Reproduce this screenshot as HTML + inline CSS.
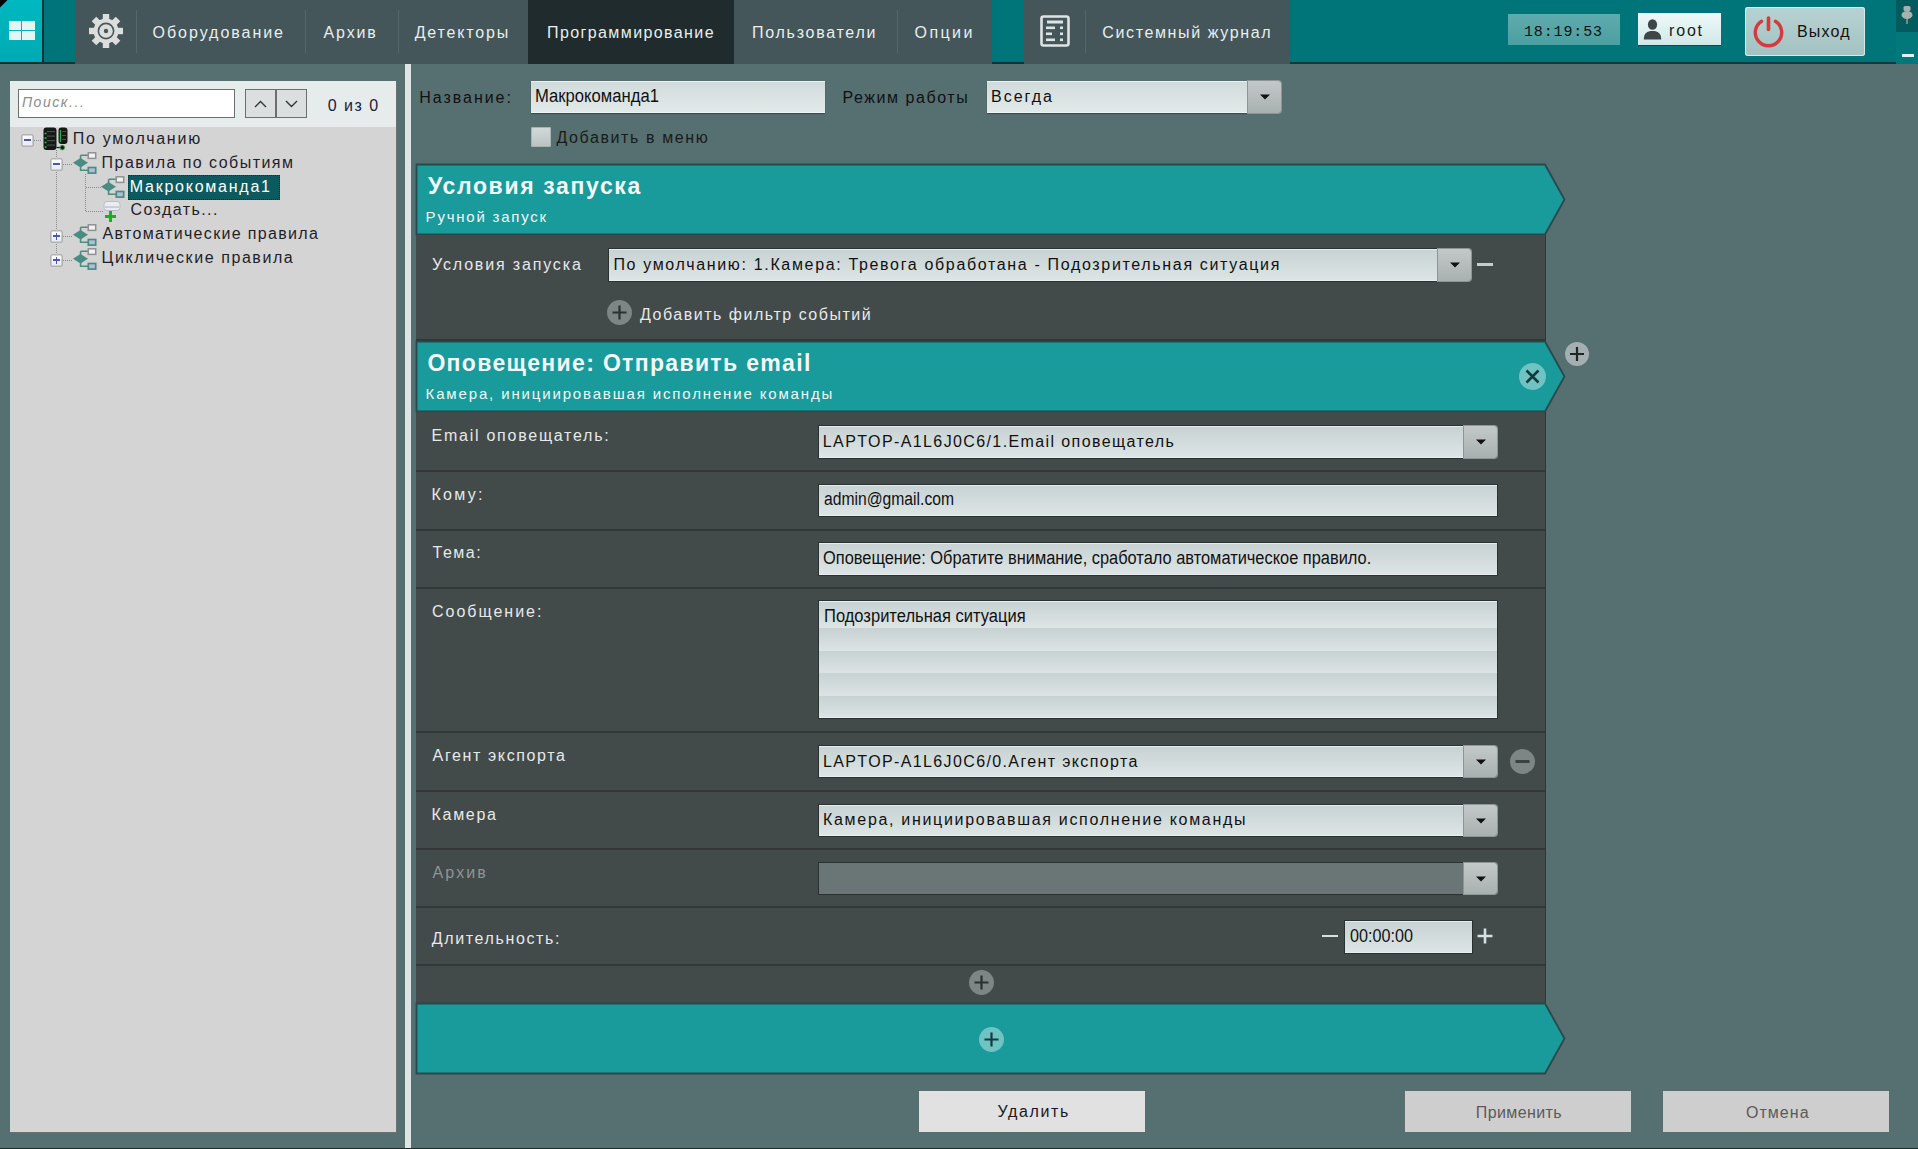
<!DOCTYPE html>
<html><head><meta charset="utf-8"><style>
html,body{margin:0;padding:0}
body{width:1918px;height:1149px;overflow:hidden;position:relative;background:#566f71;font-family:'Liberation Sans',sans-serif}
body>div,body>svg{position:absolute}
</style></head><body>
<div style="left:0px;top:0px;width:1896px;height:64px;background:#44565a"></div>
<div style="left:0px;top:0px;width:42px;height:63px;background:linear-gradient(#00b8c0,#00aab2)"></div>
<svg style="left:0;top:0" width="8" height="8"><polygon points="0,0 7.5,0 0,7.5" fill="#040404"/></svg>
<div style="left:42px;top:0px;width:2px;height:64px;background:#0b3436"></div>
<div style="left:44px;top:0px;width:31px;height:63px;background:#007579"></div>
<div style="left:0px;top:62px;width:75px;height:2px;background:#0b3436"></div>
<div style="left:9px;top:21px;width:12px;height:9px;background:#e2f6f6"></div>
<div style="left:22px;top:21px;width:13px;height:9px;background:#e2f6f6"></div>
<div style="left:9px;top:31px;width:12px;height:9px;background:#e2f6f6"></div>
<div style="left:22px;top:31px;width:13px;height:9px;background:#e2f6f6"></div>
<svg style="left:86px;top:11px" width="40" height="40" viewBox="-20 -20 40 40">
<g fill="#dcdede"><circle r="12.5"/><rect x="-3.2" y="-17" width="6.4" height="8" transform="rotate(0)"/><rect x="-3.2" y="-17" width="6.4" height="8" transform="rotate(45)"/><rect x="-3.2" y="-17" width="6.4" height="8" transform="rotate(90)"/><rect x="-3.2" y="-17" width="6.4" height="8" transform="rotate(135)"/><rect x="-3.2" y="-17" width="6.4" height="8" transform="rotate(180)"/><rect x="-3.2" y="-17" width="6.4" height="8" transform="rotate(225)"/><rect x="-3.2" y="-17" width="6.4" height="8" transform="rotate(270)"/><rect x="-3.2" y="-17" width="6.4" height="8" transform="rotate(315)"/></g>
<circle r="7.6" fill="none" stroke="#4a5759" stroke-width="1.6"/><circle r="2.2" fill="#4a5759"/></svg>
<div style="left:136px;top:10px;width:1px;height:43px;background:#56676a"></div>
<div style="left:305px;top:10px;width:1px;height:43px;background:#56676a"></div>
<div style="left:398px;top:10px;width:1px;height:43px;background:#56676a"></div>
<div style="left:897px;top:10px;width:1px;height:43px;background:#56676a"></div>
<div style="left:1085px;top:10px;width:1px;height:43px;background:#56676a"></div>
<div style="left:528px;top:0px;width:206px;height:64px;background:#1f2b2c"></div>
<div style="left:992px;top:0px;width:32px;height:64px;background:#007579"></div>
<div style="left:992px;top:62px;width:32px;height:2px;background:#0e3536"></div>
<div style="left:1290px;top:0px;width:606px;height:64px;background:#007579"></div>
<div style="left:1290px;top:62px;width:606px;height:2px;background:#0e3a3c"></div>
<svg style="left:1040px;top:15px" width="32" height="33" viewBox="0 0 32 33">
<rect x="1.5" y="1.5" width="27" height="29" rx="2" fill="none" stroke="#dfe3e3" stroke-width="2.6"/>
<g fill="#dfe3e3"><rect x="7" y="5.5" width="16" height="3"/><rect x="6" y="11.5" width="9" height="2.6"/><rect x="20" y="11.5" width="3" height="2.6"/>
<rect x="6" y="17.5" width="6" height="2.6"/><rect x="20" y="17.5" width="3" height="2.6"/><rect x="6" y="23.5" width="9" height="2.6"/><rect x="20" y="23.5" width="3" height="2.6"/></g></svg>
<div style="left:1508px;top:14px;width:112px;height:31px;background:linear-gradient(#5eabad,#4d9fa1)"></div>
<div style="left:1638px;top:13px;width:83px;height:32px;background:linear-gradient(#eef8f8,#d2e8e8);box-shadow:0 1px 0 #0a4a4c"></div>
<svg style="left:1643px;top:19px" width="19" height="21" viewBox="0 0 19 21"><g fill="#3e4546"><ellipse cx="9.5" cy="5.5" rx="4.6" ry="5.3"/><path d="M0.8 20.5 C0.8 14.2 4 12 9.5 12 C15 12 18.2 14.2 18.2 20.5 Z"/></g></svg>
<div style="left:1745px;top:7px;width:120px;height:49px;background:linear-gradient(#b7d2d2,#a4c2c2);border-radius:3px;box-shadow:inset 0 0 0 1px #d6eaea"></div>
<svg style="left:1752px;top:15px" width="33" height="33" viewBox="0 0 33 33"><path d="M9.6 6.3 A13.2 13.2 0 1 0 23.4 6.3" fill="none" stroke="#d33b3d" stroke-width="3.4" stroke-linecap="round"/><line x1="16.5" y1="3" x2="16.5" y2="14.5" stroke="#d33b3d" stroke-width="3.6" stroke-linecap="round"/></svg>
<div style="left:1896px;top:0px;width:22px;height:32px;background:#035b5e"></div>
<div style="left:1896px;top:32px;width:22px;height:32px;background:#03787b"></div>
<svg style="left:1899px;top:5px" width="16" height="22" viewBox="0 0 16 22"><g fill="#a7b2ae"><rect x="4.5" y="1" width="7" height="5" rx="1.5"/><ellipse cx="8" cy="10" rx="5.5" ry="4"/><rect x="7.4" y="13" width="1.2" height="6"/></g></svg>
<div style="left:1902px;top:54px;width:12px;height:3px;background:#e3f0f0"></div>
<div style="left:10px;top:81px;width:386px;height:1051px;background:#d4d4d4;box-shadow:1px 1px 0 #6b6f6f"></div>
<div style="left:10px;top:81px;width:386px;height:46px;background:#e6ebeb"></div>
<div style="left:18px;top:89px;width:217px;height:29px;background:#fff;box-shadow:inset 0 0 0 1px #6e6e6e"></div>
<div style="left:245px;top:89px;width:31px;height:29px;background:#dcdfe0;box-shadow:inset 0 0 0 1px #6e6e6e"></div>
<div style="left:276px;top:89px;width:31px;height:29px;background:#dcdfe0;box-shadow:inset 0 0 0 1px #6e6e6e"></div>
<svg style="left:245px;top:89px" width="62" height="29" viewBox="0 0 62 29"><path d="M10 18 L15.5 12.5 L21 18" fill="none" stroke="#333" stroke-width="1.4"/><path d="M41 12 L46.5 17.5 L52 12" fill="none" stroke="#333" stroke-width="1.4"/></svg>
<div style="left:56px;top:150px;width:1px;height:110px;background:repeating-linear-gradient(#8a8a8a 0 1px,transparent 1px 2px)"></div>
<div style="left:34px;top:140px;width:8px;height:1px;background:repeating-linear-gradient(90deg,#8a8a8a 0 1px,transparent 1px 2px)"></div>
<div style="left:63px;top:164px;width:10px;height:1px;background:repeating-linear-gradient(90deg,#8a8a8a 0 1px,transparent 1px 2px)"></div>
<div style="left:63px;top:236px;width:10px;height:1px;background:repeating-linear-gradient(90deg,#8a8a8a 0 1px,transparent 1px 2px)"></div>
<div style="left:63px;top:260px;width:10px;height:1px;background:repeating-linear-gradient(90deg,#8a8a8a 0 1px,transparent 1px 2px)"></div>
<div style="left:85px;top:174px;width:1px;height:38px;background:repeating-linear-gradient(#8a8a8a 0 1px,transparent 1px 2px)"></div>
<div style="left:86px;top:187px;width:15px;height:1px;background:repeating-linear-gradient(90deg,#8a8a8a 0 1px,transparent 1px 2px)"></div>
<div style="left:86px;top:211px;width:18px;height:1px;background:repeating-linear-gradient(90deg,#8a8a8a 0 1px,transparent 1px 2px)"></div>
<div style="left:21px;top:133.5px;width:13px;height:13.0px;background:linear-gradient(#fff,#e6e8ee);border-radius:2px;box-shadow:inset 0 0 0 1.6px #b0b2b4"></div>
<div style="left:24px;top:139.3px;width:7px;height:1.3999999999999773px;background:#4a5aa8"></div>
<div style="left:50px;top:157.5px;width:13px;height:13.0px;background:linear-gradient(#fff,#e6e8ee);border-radius:2px;box-shadow:inset 0 0 0 1.6px #b0b2b4"></div>
<div style="left:53px;top:163.3px;width:7px;height:1.3999999999999773px;background:#4a5aa8"></div>
<div style="left:50px;top:229.5px;width:13px;height:13.0px;background:linear-gradient(#fff,#e6e8ee);border-radius:2px;box-shadow:inset 0 0 0 1.6px #b0b2b4"></div>
<div style="left:53px;top:235.3px;width:7px;height:1.3999999999999773px;background:#4a5aa8"></div>
<div style="left:55.8px;top:232.5px;width:1.4000000000000057px;height:7.0px;background:#4a5aa8"></div>
<div style="left:50px;top:253.5px;width:13px;height:13.0px;background:linear-gradient(#fff,#e6e8ee);border-radius:2px;box-shadow:inset 0 0 0 1.6px #b0b2b4"></div>
<div style="left:53px;top:259.3px;width:7px;height:1.3999999999999773px;background:#4a5aa8"></div>
<div style="left:55.8px;top:256.5px;width:1.4000000000000057px;height:7.0px;background:#4a5aa8"></div>
<svg style="left:43px;top:127px" width="26" height="24" viewBox="0 0 26 24">
<rect x="0.5" y="0.5" width="13" height="22.5" rx="3" fill="#151815"/><rect x="15.5" y="0.5" width="9" height="16.5" rx="3" fill="#151815"/>
<g fill="#4a4d4a"><rect x="4" y="4" width="8" height="1.2"/><rect x="4" y="8.5" width="8" height="1.2"/><rect x="4" y="13" width="8" height="1.2"/><rect x="4" y="17.5" width="8" height="1.2"/>
<rect x="19" y="4" width="4" height="1"/><rect x="19" y="8" width="4" height="1"/><rect x="19" y="12" width="4" height="1"/></g>
<g fill="#2fae4a"><circle cx="2.6" cy="6.5" r="1.1"/><circle cx="2.6" cy="11" r="1.1"/><circle cx="2.6" cy="15.5" r="1.1"/><circle cx="2.6" cy="20" r="1.1"/><rect x="16.8" y="3" width="1.3" height="12"/></g>
<path d="M13.5 20.5 H17" stroke="#151815" stroke-width="1.2"/><circle cx="19.3" cy="20.6" r="2.3" fill="#151815" stroke="#2fae4a" stroke-width="1"/></svg>
<svg style="left:72.6px;top:152px" width="24" height="23" viewBox="0 0 24 23">
<path d="M7.6 3.2 H15 M7.6 3.2 V18.3 H15" stroke="#4f8c82" stroke-width="1.6" fill="none"/>
<path d="M0 10.8 L7.5 6 L15 10.8 L7.5 15.6 Z" fill="#4a8c82"/>
<rect x="15.3" y="0.8" width="7.4" height="5.6" fill="#f2f2f2" stroke="#8e9292" stroke-width="1.5"/>
<rect x="15.3" y="15.5" width="7.4" height="5.6" fill="#b4bcd8" stroke="#4a8c82" stroke-width="1.7"/></svg>
<svg style="left:101px;top:176px" width="24" height="23" viewBox="0 0 24 23">
<path d="M7.6 3.2 H15 M7.6 3.2 V18.3 H15" stroke="#4f8c82" stroke-width="1.6" fill="none"/>
<path d="M0 10.8 L7.5 6 L15 10.8 L7.5 15.6 Z" fill="#4a8c82"/>
<rect x="15.3" y="0.8" width="7.4" height="5.6" fill="#f2f2f2" stroke="#8e9292" stroke-width="1.5"/>
<rect x="15.3" y="15.5" width="7.4" height="5.6" fill="#b4bcd8" stroke="#4a8c82" stroke-width="1.7"/></svg>
<svg style="left:72.6px;top:224px" width="24" height="23" viewBox="0 0 24 23">
<path d="M7.6 3.2 H15 M7.6 3.2 V18.3 H15" stroke="#4f8c82" stroke-width="1.6" fill="none"/>
<path d="M0 10.8 L7.5 6 L15 10.8 L7.5 15.6 Z" fill="#4a8c82"/>
<rect x="15.3" y="0.8" width="7.4" height="5.6" fill="#f2f2f2" stroke="#8e9292" stroke-width="1.5"/>
<rect x="15.3" y="15.5" width="7.4" height="5.6" fill="#b4bcd8" stroke="#4a8c82" stroke-width="1.7"/></svg>
<svg style="left:72.6px;top:248px" width="24" height="23" viewBox="0 0 24 23">
<path d="M7.6 3.2 H15 M7.6 3.2 V18.3 H15" stroke="#4f8c82" stroke-width="1.6" fill="none"/>
<path d="M0 10.8 L7.5 6 L15 10.8 L7.5 15.6 Z" fill="#4a8c82"/>
<rect x="15.3" y="0.8" width="7.4" height="5.6" fill="#f2f2f2" stroke="#8e9292" stroke-width="1.5"/>
<rect x="15.3" y="15.5" width="7.4" height="5.6" fill="#b4bcd8" stroke="#4a8c82" stroke-width="1.7"/></svg>
<svg style="left:103px;top:201px" width="20" height="22" viewBox="0 0 20 22"><rect x="1" y="0.5" width="16" height="9" rx="3" fill="#e9ecf0" stroke="#b8bec8" stroke-width="1"/><rect x="1" y="5" width="16" height="2" fill="#c9ced8"/>
<path d="M7.5 10 V21 M2 15.5 H13" stroke="#16b416" stroke-width="3"/></svg>
<div style="left:128px;top:175px;width:152px;height:25px;background:#0c5a60;outline:1px dotted #2a2a2a;outline-offset:-1px"></div>
<div style="left:405px;top:64px;width:6px;height:1085px;background:#e0e4e3"></div>
<svg style="left:0;top:0" width="1918" height="1149"><polygon points="416.5,164.5 1545,164.5 1564.5,199.5 1545,234.5 416.5,234.5" fill="#199a9b" stroke="#29494a" stroke-width="1.8"/></svg>
<div style="left:416px;top:235px;width:1130px;height:106px;background:#434a4a"></div>
<div style="left:416px;top:339px;width:1130px;height:2px;background:#2f3636"></div>
<svg style="left:0;top:0" width="1918" height="1149"><polygon points="416.5,341.5 1545,341.5 1564.5,376.5 1545,411.5 416.5,411.5" fill="#199a9b" stroke="#29494a" stroke-width="1.8"/></svg>
<div style="left:416px;top:412px;width:1130px;height:591px;background:#434a4a"></div>
<div style="left:416px;top:470px;width:1130px;height:2px;background:#323838"></div>
<div style="left:416px;top:529px;width:1130px;height:2px;background:#323838"></div>
<div style="left:416px;top:587px;width:1130px;height:2px;background:#323838"></div>
<div style="left:416px;top:731px;width:1130px;height:2px;background:#323838"></div>
<div style="left:416px;top:790px;width:1130px;height:2px;background:#323838"></div>
<div style="left:416px;top:848px;width:1130px;height:2px;background:#323838"></div>
<div style="left:416px;top:906px;width:1130px;height:2px;background:#323838"></div>
<div style="left:416px;top:964px;width:1130px;height:2px;background:#323838"></div>
<div style="left:1545px;top:235px;width:1px;height:106px;background:#2f3636"></div>
<div style="left:1545px;top:412px;width:1px;height:591px;background:#2f3636"></div>
<svg style="left:0;top:0" width="1918" height="1149"><polygon points="416.5,1003.5 1545,1003.5 1564.5,1038.5 1545,1073.5 416.5,1073.5" fill="#199a9b" stroke="#29494a" stroke-width="1.8"/></svg>
<div style="left:531px;top:81px;width:294px;height:32px;background:linear-gradient(#d2dbdb,#e2e9e9);box-shadow:inset 0 1px 0 #eaf0f0,inset 0 -1px 0 #eef3f3,0 1px 1px rgba(0,0,0,.3)"></div>
<div style="left:987px;top:81px;width:260px;height:32px;background:linear-gradient(#d2dbdb,#e2e9e9);box-shadow:inset 0 1px 0 #eaf0f0,inset 0 -1px 0 #eef3f3,0 1px 1px rgba(0,0,0,.3)"></div>
<div style="left:1248px;top:81px;width:33px;height:32px;background:linear-gradient(#c3c9c9,#a9b0b0);border-radius:0 3px 3px 0;box-shadow:0 0 0 1px #8d9595"></div>
<svg style="left:1258.5px;top:93.0px" width="12" height="8" viewBox="0 0 12 8"><path d="M1 1.5 H11 L6 6.5 Z" fill="#111"/></svg>
<div style="left:531px;top:127px;width:20px;height:20px;background:linear-gradient(#d4dada,#b9c1c1);border-radius:2px;box-shadow:inset 0 0 0 1px #aab2b2"></div>
<div style="left:609px;top:249px;width:828px;height:32px;background:linear-gradient(#c8d2d2,#dde5e5);box-shadow:inset 0 1px 0 #e6eded,inset 0 -1px 0 #e9efef,0 0 0 1px rgba(20,30,30,.55)"></div>
<div style="left:1438px;top:249px;width:33px;height:32px;background:linear-gradient(#c3c9c9,#a9b0b0);border-radius:0 3px 3px 0;box-shadow:0 0 0 1px #8d9595"></div>
<svg style="left:1448.5px;top:261.0px" width="12" height="8" viewBox="0 0 12 8"><path d="M1 1.5 H11 L6 6.5 Z" fill="#111"/></svg>
<div style="left:1477px;top:263px;width:16px;height:3px;background:#c4cccc"></div>
<svg style="left:607.0px;top:299.8px" width="25" height="25" viewBox="0 0 25 25"><circle cx="12.5" cy="12.5" r="12.5" fill="#7d8585"/><path d="M5.5 12.5 H19.5 M12.5 5.5 V19.5" stroke="#2b3131" stroke-width="2.2"/></svg>
<svg style="left:1519.1px;top:362.6px" width="27" height="27" viewBox="0 0 27 27"><circle cx="13.5" cy="13.5" r="13.5" fill="#6fc3c3"/><path d="M7.5 7.5 L19.5 19.5 M19.5 7.5 L7.5 19.5" stroke="#17393a" stroke-width="2.6"/></svg>
<svg style="left:1564.6px;top:342.0px" width="24" height="24" viewBox="0 0 24 24"><circle cx="12.0" cy="12.0" r="12.0" fill="#a3afb0"/><path d="M5.0 12.0 H19.0 M12.0 5.0 V19.0" stroke="#1e2525" stroke-width="2.2"/></svg>
<div style="left:819px;top:426px;width:644px;height:32px;background:linear-gradient(#c8d2d2,#dde5e5);box-shadow:inset 0 1px 0 #e6eded,inset 0 -1px 0 #e9efef,0 0 0 1px rgba(20,30,30,.55)"></div>
<div style="left:1464px;top:426px;width:33px;height:32px;background:linear-gradient(#c3c9c9,#a9b0b0);border-radius:0 3px 3px 0;box-shadow:0 0 0 1px #8d9595"></div>
<svg style="left:1474.5px;top:438.0px" width="12" height="8" viewBox="0 0 12 8"><path d="M1 1.5 H11 L6 6.5 Z" fill="#111"/></svg>
<div style="left:819px;top:485px;width:678px;height:31px;background:linear-gradient(#c8d2d2,#dde5e5);box-shadow:inset 0 1px 0 #e6eded,inset 0 -1px 0 #e9efef,0 0 0 1px rgba(20,30,30,.55)"></div>
<div style="left:819px;top:543px;width:678px;height:32px;background:linear-gradient(#c8d2d2,#dde5e5);box-shadow:inset 0 1px 0 #e6eded,inset 0 -1px 0 #e9efef,0 0 0 1px rgba(20,30,30,.55)"></div>
<div style="left:819px;top:601px;width:678px;height:117px;background:repeating-linear-gradient(#c8d2d2 0px,#dce4e4 22.5px);background-position:0 5px;box-shadow:inset 0 1px 0 #e6eded,inset 0 -1px 0 #e9efef,0 0 0 1px rgba(20,30,30,.55)"></div>
<div style="left:819px;top:602px;width:678px;height:26px;background:linear-gradient(#c8d2d2,#dde5e5)"></div>
<div style="left:819px;top:746px;width:644px;height:31px;background:linear-gradient(#c8d2d2,#dde5e5);box-shadow:inset 0 1px 0 #e6eded,inset 0 -1px 0 #e9efef,0 0 0 1px rgba(20,30,30,.55)"></div>
<div style="left:1464px;top:746px;width:33px;height:31px;background:linear-gradient(#c3c9c9,#a9b0b0);border-radius:0 3px 3px 0;box-shadow:0 0 0 1px #8d9595"></div>
<svg style="left:1474.5px;top:757.5px" width="12" height="8" viewBox="0 0 12 8"><path d="M1 1.5 H11 L6 6.5 Z" fill="#111"/></svg>
<svg style="left:1510.0px;top:749.2px" width="25" height="25" viewBox="0 0 25 25"><circle cx="12.5" cy="12.5" r="12.5" fill="#7d8585"/><path d="M5.5 12.5 H19.5" stroke="#3a4141" stroke-width="3"/></svg>
<div style="left:819px;top:805px;width:644px;height:31px;background:linear-gradient(#c8d2d2,#dde5e5);box-shadow:inset 0 1px 0 #e6eded,inset 0 -1px 0 #e9efef,0 0 0 1px rgba(20,30,30,.55)"></div>
<div style="left:1464px;top:805px;width:33px;height:31px;background:linear-gradient(#c3c9c9,#a9b0b0);border-radius:0 3px 3px 0;box-shadow:0 0 0 1px #8d9595"></div>
<svg style="left:1474.5px;top:816.5px" width="12" height="8" viewBox="0 0 12 8"><path d="M1 1.5 H11 L6 6.5 Z" fill="#111"/></svg>
<div style="left:819px;top:863px;width:644px;height:31px;background:#6a7575;box-shadow:0 0 0 1px #2b3232"></div>
<div style="left:1464px;top:863px;width:33px;height:31px;background:linear-gradient(#c3c9c9,#a9b0b0);border-radius:0 3px 3px 0;box-shadow:0 0 0 1px #8d9595"></div>
<svg style="left:1474.5px;top:874.5px" width="12" height="8" viewBox="0 0 12 8"><path d="M1 1.5 H11 L6 6.5 Z" fill="#111"/></svg>
<div style="left:1322px;top:934.5px;width:16px;height:2.5px;background:#d5e0e0"></div>
<div style="left:1345px;top:921px;width:127px;height:32px;background:linear-gradient(#c8d2d2,#dde5e5);box-shadow:inset 0 1px 0 #e6eded,inset 0 -1px 0 #e9efef,0 0 0 1px rgba(20,30,30,.55)"></div>
<svg style="left:1476px;top:927px" width="18" height="18" viewBox="0 0 18 18"><path d="M1.5 9 H16.5 M9 1.5 V16.5" stroke="#d5e0e0" stroke-width="2.6"/></svg>
<svg style="left:968.5px;top:969.9px" width="25" height="25" viewBox="0 0 25 25"><circle cx="12.5" cy="12.5" r="12.5" fill="#7d8585"/><path d="M5.5 12.5 H19.5 M12.5 5.5 V19.5" stroke="#2b3131" stroke-width="2.2"/></svg>
<svg style="left:978.5px;top:1026.7px" width="25" height="25" viewBox="0 0 25 25"><circle cx="12.5" cy="12.5" r="12.5" fill="#6fc3c3"/><path d="M5.5 12.5 H19.5 M12.5 5.5 V19.5" stroke="#17393a" stroke-width="2.2"/></svg>
<div style="left:919px;top:1091px;width:226px;height:41px;background:#e1e1e1"></div>
<div style="left:1405px;top:1091px;width:226px;height:41px;background:#cecece"></div>
<div style="left:1663px;top:1091px;width:226px;height:41px;background:#cecece"></div>
<div style="left:0px;top:1148px;width:1918px;height:1px;background:#1e2b2d"></div>
<div style="left:152.6px;top:25.0px;line-height:16px;white-space:pre;font-family:'Liberation Sans', sans-serif;font-size:16px;font-weight:400;color:#e9eeee;letter-spacing:1.96px">Оборудование</div>
<div style="left:323.5px;top:25.0px;line-height:16px;white-space:pre;font-family:'Liberation Sans', sans-serif;font-size:16px;font-weight:400;color:#e9eeee;letter-spacing:1.88px">Архив</div>
<div style="left:414.7px;top:25.0px;line-height:16px;white-space:pre;font-family:'Liberation Sans', sans-serif;font-size:16px;font-weight:400;color:#e9eeee;letter-spacing:1.85px">Детекторы</div>
<div style="left:547.0px;top:25.0px;line-height:16px;white-space:pre;font-family:'Liberation Sans', sans-serif;font-size:16px;font-weight:400;color:#e9eeee;letter-spacing:1.40px">Программирование</div>
<div style="left:752.0px;top:25.0px;line-height:16px;white-space:pre;font-family:'Liberation Sans', sans-serif;font-size:16px;font-weight:400;color:#e9eeee;letter-spacing:1.73px">Пользователи</div>
<div style="left:914.5px;top:25.0px;line-height:16px;white-space:pre;font-family:'Liberation Sans', sans-serif;font-size:16px;font-weight:400;color:#e9eeee;letter-spacing:2.45px">Опции</div>
<div style="left:1102.3px;top:25.0px;line-height:16px;white-space:pre;font-family:'Liberation Sans', sans-serif;font-size:16px;font-weight:400;color:#e9eeee;letter-spacing:1.63px">Системный журнал</div>
<div style="left:1524.0px;top:25.0px;line-height:15px;white-space:pre;font-family:'Liberation Mono', monospace;font-size:15px;font-weight:400;color:#111;letter-spacing:0.86px">18:19:53</div>
<div style="left:1669.0px;top:23.0px;line-height:16px;white-space:pre;font-family:'Liberation Sans', sans-serif;font-size:16px;font-weight:400;color:#1a1a1a;letter-spacing:1.83px">root</div>
<div style="left:1797.0px;top:24.3px;line-height:16px;white-space:pre;font-family:'Liberation Sans', sans-serif;font-size:16px;font-weight:400;color:#111;letter-spacing:1.15px">Выход</div>
<div style="left:21.9px;top:95.4px;line-height:14px;white-space:pre;font-family:'Liberation Sans', sans-serif;font-size:14px;font-weight:400;font-style:italic;color:#8c8c8c;letter-spacing:1.56px">Поиск...</div>
<div style="left:327.7px;top:98.0px;line-height:16px;white-space:pre;font-family:'Liberation Sans', sans-serif;font-size:16px;font-weight:400;color:#20203a;letter-spacing:1.52px">0 из 0</div>
<div style="left:72.7px;top:130.5px;line-height:16px;white-space:pre;font-family:'Liberation Sans', sans-serif;font-size:16px;font-weight:400;color:#1f1f2a;letter-spacing:1.75px">По умолчанию</div>
<div style="left:101.6px;top:155.0px;line-height:16px;white-space:pre;font-family:'Liberation Sans', sans-serif;font-size:16px;font-weight:400;color:#1f1f2a;letter-spacing:1.46px">Правила по событиям</div>
<div style="left:129.8px;top:178.5px;line-height:16px;white-space:pre;font-family:'Liberation Sans', sans-serif;font-size:16px;font-weight:400;color:#ffffff;letter-spacing:1.75px">Макрокоманда1</div>
<div style="left:130.5px;top:202.1px;line-height:16px;white-space:pre;font-family:'Liberation Sans', sans-serif;font-size:16px;font-weight:400;color:#1f1f2a;letter-spacing:1.42px">Создать...</div>
<div style="left:102.6px;top:226.3px;line-height:16px;white-space:pre;font-family:'Liberation Sans', sans-serif;font-size:16px;font-weight:400;color:#1f1f2a;letter-spacing:1.33px">Автоматические правила</div>
<div style="left:101.6px;top:250.2px;line-height:16px;white-space:pre;font-family:'Liberation Sans', sans-serif;font-size:16px;font-weight:400;color:#1f1f2a;letter-spacing:1.57px">Циклические правила</div>
<div style="left:419.3px;top:90.0px;line-height:16px;white-space:pre;font-family:'Liberation Sans', sans-serif;font-size:16px;font-weight:400;color:#111;letter-spacing:1.96px">Название:</div>
<div style="left:535.1px;top:86.7px;line-height:18px;white-space:pre;font-family:'Liberation Sans', sans-serif;font-size:18px;font-weight:400;color:#111;transform:scaleX(0.9242);transform-origin:0 0">Макрокоманда1</div>
<div style="left:842.5px;top:90.0px;line-height:16px;white-space:pre;font-family:'Liberation Sans', sans-serif;font-size:16px;font-weight:400;color:#111;letter-spacing:1.55px">Режим работы</div>
<div style="left:991.0px;top:89.2px;line-height:16px;white-space:pre;font-family:'Liberation Sans', sans-serif;font-size:16px;font-weight:400;color:#111;letter-spacing:2.00px">Всегда</div>
<div style="left:556.4px;top:129.9px;line-height:16px;white-space:pre;font-family:'Liberation Sans', sans-serif;font-size:16px;font-weight:400;color:#1a1a1a;letter-spacing:1.61px">Добавить в меню</div>
<div style="left:428.0px;top:174.5px;line-height:23px;white-space:pre;font-family:'Liberation Sans', sans-serif;font-size:23px;font-weight:700;color:#f4f7f7;letter-spacing:1.65px">Условия запуска</div>
<div style="left:425.6px;top:209.1px;line-height:15px;white-space:pre;font-family:'Liberation Sans', sans-serif;font-size:15px;font-weight:400;color:#f4f7f7;letter-spacing:1.78px">Ручной запуск</div>
<div style="left:432.0px;top:257.4px;line-height:16px;white-space:pre;font-family:'Liberation Sans', sans-serif;font-size:16px;font-weight:400;color:#e6e9e9;letter-spacing:1.84px">Условия запуска</div>
<div style="left:613.4px;top:257.2px;line-height:16px;white-space:pre;font-family:'Liberation Sans', sans-serif;font-size:16px;font-weight:400;color:#111;letter-spacing:1.66px">По умолчанию: 1.Камера: Тревога обработана - Подозрительная ситуация</div>
<div style="left:640.0px;top:307.0px;line-height:16px;white-space:pre;font-family:'Liberation Sans', sans-serif;font-size:16px;font-weight:400;color:#e6e9e9;letter-spacing:1.52px">Добавить фильтр событий</div>
<div style="left:427.4px;top:351.5px;line-height:23px;white-space:pre;font-family:'Liberation Sans', sans-serif;font-size:23px;font-weight:700;color:#f4f7f7;letter-spacing:1.33px">Оповещение: Отправить email</div>
<div style="left:425.6px;top:386.1px;line-height:15px;white-space:pre;font-family:'Liberation Sans', sans-serif;font-size:15px;font-weight:400;color:#f4f7f7;letter-spacing:1.85px">Камера, инициировавшая исполнение команды</div>
<div style="left:431.5px;top:428.2px;line-height:16px;white-space:pre;font-family:'Liberation Sans', sans-serif;font-size:16px;font-weight:400;color:#e6e9e9;letter-spacing:1.75px">Email оповещатель:</div>
<div style="left:822.8px;top:433.8px;line-height:16px;white-space:pre;font-family:'Liberation Sans', sans-serif;font-size:16px;font-weight:400;color:#111;letter-spacing:1.39px">LAPTOP-A1L6J0C6/1.Email оповещатель</div>
<div style="left:431.5px;top:487.0px;line-height:16px;white-space:pre;font-family:'Liberation Sans', sans-serif;font-size:16px;font-weight:400;color:#e6e9e9;letter-spacing:2.25px">Кому:</div>
<div style="left:824.0px;top:489.8px;line-height:18px;white-space:pre;font-family:'Liberation Sans', sans-serif;font-size:18px;font-weight:400;color:#111;transform:scaleX(0.8707);transform-origin:0 0">admin@gmail.com</div>
<div style="left:432.5px;top:545.2px;line-height:16px;white-space:pre;font-family:'Liberation Sans', sans-serif;font-size:16px;font-weight:400;color:#e6e9e9;letter-spacing:1.50px">Тема:</div>
<div style="left:823.1px;top:548.5px;line-height:18px;white-space:pre;font-family:'Liberation Sans', sans-serif;font-size:18px;font-weight:400;color:#111;transform:scaleX(0.9110);transform-origin:0 0">Оповещение: Обратите внимание, сработало автоматическое правило.</div>
<div style="left:432.0px;top:603.7px;line-height:16px;white-space:pre;font-family:'Liberation Sans', sans-serif;font-size:16px;font-weight:400;color:#e6e9e9;letter-spacing:1.99px">Сообщение:</div>
<div style="left:823.8px;top:607.4px;line-height:18px;white-space:pre;font-family:'Liberation Sans', sans-serif;font-size:18px;font-weight:400;color:#111;transform:scaleX(0.9183);transform-origin:0 0">Подозрительная ситуация</div>
<div style="left:432.6px;top:747.9px;line-height:16px;white-space:pre;font-family:'Liberation Sans', sans-serif;font-size:16px;font-weight:400;color:#e6e9e9;letter-spacing:1.63px">Агент экспорта</div>
<div style="left:823.0px;top:753.5px;line-height:16px;white-space:pre;font-family:'Liberation Sans', sans-serif;font-size:16px;font-weight:400;color:#111;letter-spacing:1.37px">LAPTOP-A1L6J0C6/0.Агент экспорта</div>
<div style="left:431.6px;top:806.6px;line-height:16px;white-space:pre;font-family:'Liberation Sans', sans-serif;font-size:16px;font-weight:400;color:#e6e9e9;letter-spacing:1.68px">Камера</div>
<div style="left:823.0px;top:812.0px;line-height:16px;white-space:pre;font-family:'Liberation Sans', sans-serif;font-size:16px;font-weight:400;color:#111;letter-spacing:1.69px">Камера, инициировавшая исполнение команды</div>
<div style="left:432.6px;top:864.7px;line-height:16px;white-space:pre;font-family:'Liberation Sans', sans-serif;font-size:16px;font-weight:400;color:#8e9595;letter-spacing:2.10px">Архив</div>
<div style="left:431.8px;top:930.7px;line-height:16px;white-space:pre;font-family:'Liberation Sans', sans-serif;font-size:16px;font-weight:400;color:#e6e9e9;letter-spacing:1.62px">Длительность:</div>
<div style="left:1350.4px;top:926.7px;line-height:18px;white-space:pre;font-family:'Liberation Sans', sans-serif;font-size:18px;font-weight:400;color:#111;transform:scaleX(0.8971);transform-origin:0 0">00:00:00</div>
<div style="left:997.5px;top:1104.2px;line-height:16px;white-space:pre;font-family:'Liberation Sans', sans-serif;font-size:16px;font-weight:400;color:#1a1a1a;letter-spacing:1.62px">Удалить</div>
<div style="left:1475.8px;top:1104.6px;line-height:16px;white-space:pre;font-family:'Liberation Sans', sans-serif;font-size:16px;font-weight:400;color:#5a5a5a;letter-spacing:0.40px">Применить</div>
<div style="left:1745.9px;top:1104.6px;line-height:16px;white-space:pre;font-family:'Liberation Sans', sans-serif;font-size:16px;font-weight:400;color:#5a5a5a;letter-spacing:1.06px">Отмена</div>
</body></html>
